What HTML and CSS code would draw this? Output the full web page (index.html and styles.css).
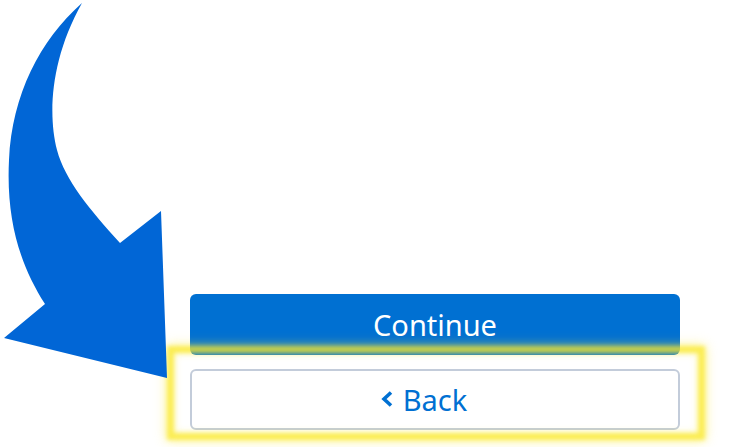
FILE: index.html
```html
<!DOCTYPE html>
<html lang="en">
<head>
    <meta charset="UTF-8">
    <meta name="viewport" content="width=device-width, initial-scale=1.0">
    <title>Continue or Back</title>
    <link rel="stylesheet" href="styles.css">
</head>
<body>

    <div class="actions">
        <button type="button" class="btn btn-primary">Continue</button>
        <button type="button" class="btn btn-neutral">
            <svg class="chevron" viewBox="0 0 12 16" width="12" height="16">
                <path d="M10 1.5 L3 8 L10 14.5" fill="none" stroke="currentColor" stroke-width="3.6"/>
            </svg>
            <span>Back</span>
        </button>
    </div>

    <!-- callout: highlight around the back button -->
    <div class="highlight"></div>

    <!-- callout: big arrow pointing at the back button -->
    <svg class="arrow" viewBox="0 0 180 390" width="180" height="390">
        <path d="M82 3
                 C40 40 12 95 9 160
                 C6 220 20 265 45 304
                 L4 338
                 L167 378
                 L161 211
                 L120 243
                 C90 210 65 180 57 150
                 C48 115 50 60 82 3 Z"
              fill="#0166d6"/>
    </svg>

</body>
</html>
```

FILE: styles.css
```css
body {
    font-family: 'Noto Sans', 'Open Sans', sans-serif;
    background-color: #fff;
    margin: 0;
    width: 735px;
    height: 447px;
    overflow: hidden;
    position: relative;
}

.actions {
    display: flex;
    flex-direction: column;
    gap: 14px;
    width: 490px;
    padding: 294px 0 0 190px;
}

.btn {
    height: 61px;
    border-radius: 6px;
    font-family: inherit;
    font-size: 29px;
    display: flex;
    align-items: center;
    justify-content: center;
    gap: 10px;
    cursor: pointer;
}

.btn-primary {
    background-color: #0070d2;
    color: #fff;
    border: none;
}

.btn-neutral {
    background-color: #fff;
    color: #0070d2;
    border: 2px solid #c3ccda;
}

.chevron {
    flex-shrink: 0;
    margin-left: -22px;
    margin-top: -2px;
}

.highlight {
    position: absolute;
    left: 167px;
    top: 346px;
    width: 524px;
    height: 80px;
    border: 7px solid rgba(250, 232, 40, 0.8);
    box-shadow: 0 0 10px rgba(250, 235, 60, 0.65), inset 0 0 6px rgba(250, 235, 60, 0.45);
    filter: blur(2px);
}

.arrow {
    position: absolute;
    left: 0;
    top: 0;
}
```
